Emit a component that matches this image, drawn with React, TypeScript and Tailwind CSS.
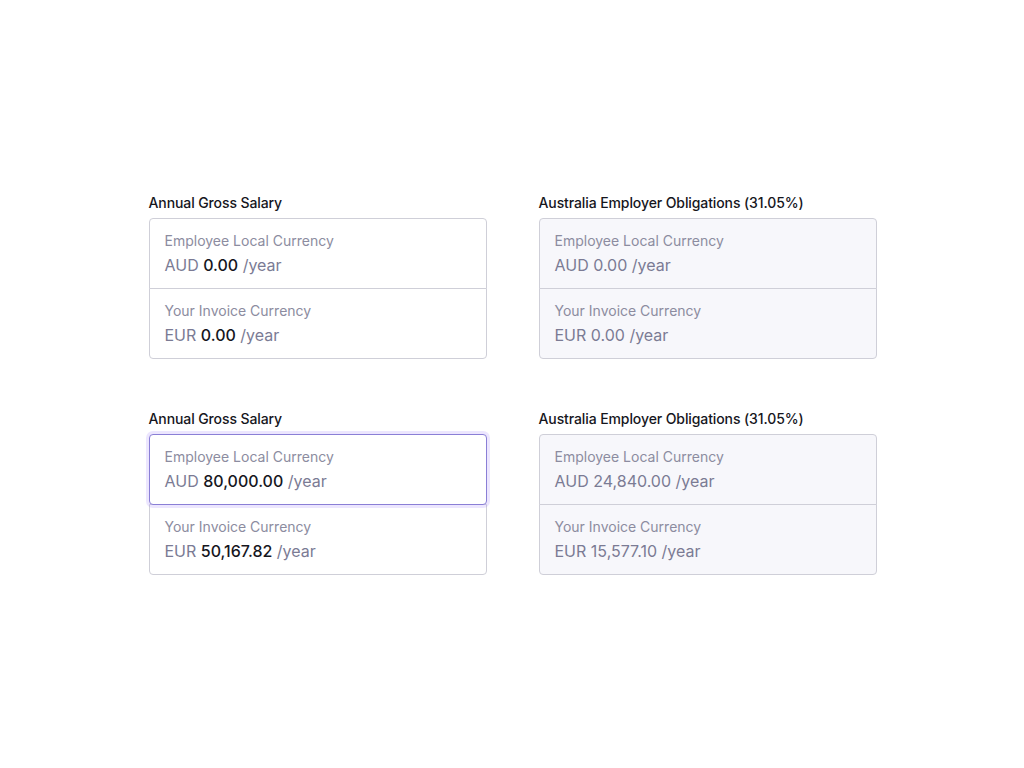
import React from 'react';

type Row = {
  label: string;
  currency: string;
  amount: string;
};

interface AmountCardProps {
  title: string;
  rows: Row[];
  readOnly?: boolean;
  focused?: boolean;
}

function AmountCard({ title, rows, readOnly = false, focused = false }: AmountCardProps) {
  return (
    <div className="flex flex-col">
      <div className="text-[14px] leading-5 font-medium tracking-[-0.1px] text-[#16161d] mb-[5px]">{title}</div>
      <div className="flex flex-col">
        {rows.map((row, i) => {
          const isFirst = i === 0;
          const isLast = i === rows.length - 1;
          const active = focused && isFirst;
          return (
            <div
              key={row.label}
              className={[
                'relative border px-[15px] pt-[12px] pb-[11px]',
                isFirst ? 'rounded-t-[4px]' : '-mt-px',
                isLast ? 'rounded-b-[4px]' : '',
                readOnly ? 'bg-[#f7f7fb]' : 'bg-white',
                active
                  ? 'z-10 rounded-[4px] border-[#8a7fd6] shadow-[0_0_0_3px_rgba(167,139,250,0.22)]'
                  : 'border-[#cfcfd8]',
              ].join(' ')}
            >
              <div className="text-[14px] leading-5 text-[#8c8ca0]">{row.label}</div>
              <div className="mt-[2px] text-[16px] leading-6 text-[#7b7b94]">
                {row.currency}{' '}
                <span className={readOnly ? 'text-[#7b7b94]' : 'font-medium text-[#16161d]'}>{row.amount}</span>{' '}
                /year
              </div>
            </div>
          );
        })}
      </div>
    </div>
  );
}

export default function App() {
  return (
    <div
      className="min-h-screen bg-white flex items-center justify-center"
      style={{ fontFamily: 'Inter, "Noto Sans", sans-serif' }}
    >
      <div className="grid grid-cols-[338px_338px] gap-x-[52px] gap-y-[50px] pl-px">
        <AmountCard
          title="Annual Gross Salary"
          rows={[
            { label: 'Employee Local Currency', currency: 'AUD', amount: '0.00' },
            { label: 'Your Invoice Currency', currency: 'EUR', amount: '0.00' },
          ]}
        />
        <AmountCard
          title="Australia Employer Obligations (31.05%)"
          readOnly
          rows={[
            { label: 'Employee Local Currency', currency: 'AUD', amount: '0.00' },
            { label: 'Your Invoice Currency', currency: 'EUR', amount: '0.00' },
          ]}
        />
        <AmountCard
          title="Annual Gross Salary"
          focused
          rows={[
            { label: 'Employee Local Currency', currency: 'AUD', amount: '80,000.00' },
            { label: 'Your Invoice Currency', currency: 'EUR', amount: '50,167.82' },
          ]}
        />
        <AmountCard
          title="Australia Employer Obligations (31.05%)"
          readOnly
          rows={[
            { label: 'Employee Local Currency', currency: 'AUD', amount: '24,840.00' },
            { label: 'Your Invoice Currency', currency: 'EUR', amount: '15,577.10' },
          ]}
        />
      </div>
    </div>
  );
}
